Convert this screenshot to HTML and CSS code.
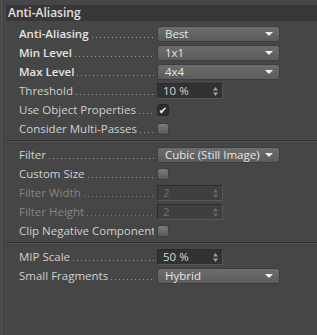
FILE: index.html
```html
<!DOCTYPE html>
<html lang="en">
<head>
  <meta charset="UTF-8" />
  <title>Anti-Aliasing</title>
  <link rel="stylesheet" href="styles.css">
</head>
<body>
  <div class="panel">
    <div class="group-title">Anti-Aliasing</div>

    <div class="rows">
      <div class="row">
        <div class="label strong"><span>Anti-Aliasing</span><span class="dots"></span></div>
        <div class="dropdown">Best<span class="arrow"></span></div>
      </div>
      <div class="row">
        <div class="label strong"><span>Min Level</span><span class="dots"></span></div>
        <div class="dropdown">1x1<span class="arrow"></span></div>
      </div>
      <div class="row">
        <div class="label strong"><span>Max Level</span><span class="dots"></span></div>
        <div class="dropdown">4x4<span class="arrow"></span></div>
      </div>
      <div class="row">
        <div class="label"><span>Threshold</span><span class="dots"></span></div>
        <div class="number">10 %<svg class="spin" width="5" height="9" viewBox="0 0 5 9"><path d="M0 3.5L2.5 0L5 3.5Z M0 5.5L5 5.5L2.5 9Z"/></svg></div>
      </div>
      <div class="row">
        <div class="label"><span>Use Object Properties</span><span class="dots"></span></div>
        <div class="check checked">&#10004;</div>
      </div>
      <div class="row">
        <div class="label"><span>Consider Multi-Passes</span><span class="dots"></span></div>
        <div class="check"></div>
      </div>
    </div>

    <div class="sep"></div>

    <div class="rows">
      <div class="row">
        <div class="label"><span>Filter</span><span class="dots"></span></div>
        <div class="dropdown">Cubic (Still Image)<span class="arrow"></span></div>
      </div>
      <div class="row">
        <div class="label"><span>Custom Size</span><span class="dots"></span></div>
        <div class="check"></div>
      </div>
      <div class="row disabled">
        <div class="label"><span>Filter Width</span><span class="dots"></span></div>
        <div class="number">2<svg class="spin" width="5" height="9" viewBox="0 0 5 9"><path d="M0 3.5L2.5 0L5 3.5Z M0 5.5L5 5.5L2.5 9Z"/></svg></div>
      </div>
      <div class="row disabled">
        <div class="label"><span>Filter Height</span><span class="dots"></span></div>
        <div class="number">2<svg class="spin" width="5" height="9" viewBox="0 0 5 9"><path d="M0 3.5L2.5 0L5 3.5Z M0 5.5L5 5.5L2.5 9Z"/></svg></div>
      </div>
      <div class="row">
        <div class="label"><span>Clip Negative Component</span><span class="dots"></span></div>
        <div class="check"></div>
      </div>
    </div>

    <div class="sep"></div>

    <div class="rows">
      <div class="row">
        <div class="label"><span>MIP Scale</span><span class="dots"></span></div>
        <div class="number">50 %<svg class="spin" width="5" height="9" viewBox="0 0 5 9"><path d="M0 3.5L2.5 0L5 3.5Z M0 5.5L5 5.5L2.5 9Z"/></svg></div>
      </div>
      <div class="row">
        <div class="label"><span>Small Fragments</span><span class="dots"></span></div>
        <div class="dropdown">Hybrid<span class="arrow"></span></div>
      </div>
    </div>
  </div>
</body>
</html>
```

FILE: styles.css
```css
* {
  margin: 0;
  padding: 0;
  box-sizing: border-box;
}

body {
  background-color: #464646;
  font-family: 'Open Sans', 'DejaVu Sans', sans-serif;
  font-size: 11.5px;
  color: #d0d0d0;
  height: 335px;
  border-left: 1px solid #555555;
  margin-left: 1px;
}

.panel {
  padding: 5px 0 0 4px;
}

.group-title {
  height: 16px;
  line-height: 16px;
  padding-left: 2px;
  background-color: #373737;
  color: #e2e2e2;
  font-weight: 600;
  font-size: 12px;
  margin-bottom: 3px;
}

.rows {
  padding-left: 13px;
}

.row {
  height: 19px;
  display: flex;
  align-items: center;
}

.label {
  width: 135px;
  margin-right: 3px;
  display: flex;
  align-items: baseline;
  white-space: nowrap;
  overflow: hidden;
}

.label.strong {
  font-weight: 600;
  color: #e4e4e4;
}

.dots {
  flex: 1;
  height: 9px;
  margin-left: 3px;
  background: linear-gradient(to right, #9a9a9a 1px, transparent 1px) repeat-x left bottom;
  background-size: 4px 1px;
}

.disabled .label {
  color: #858585;
}

.disabled .dots {
  background-image: linear-gradient(to right, #7a7a7a 1px, transparent 1px);
}

.dropdown {
  position: relative;
  width: 123px;
  height: 16px;
  line-height: 14px;
  padding-left: 7px;
  border: 1px solid #3d3d3d;
  border-radius: 3px;
  background: linear-gradient(#6d6d6d, #5b5b5b);
  color: #e6e6e6;
}

.arrow {
  position: absolute;
  right: 6px;
  top: 5px;
  width: 0;
  height: 0;
  border-left: 4px solid transparent;
  border-right: 4px solid transparent;
  border-top: 4px solid #f0f0f0;
}

.number {
  position: relative;
  width: 66px;
  height: 16px;
  line-height: 14px;
  padding-left: 5px;
  background-color: #323232;
  border: 1px solid #2b2b2b;
  border-bottom-color: #585858;
  border-right-color: #585858;
  color: #d6d6d6;
}

.disabled .number {
  background-color: #3f3f3f;
  color: #6f6f6f;
}

.spin {
  position: absolute;
  right: 4px;
  top: 3px;
  fill: #a0a0a0;
}

.disabled .spin {
  fill: #666666;
}

.check {
  width: 12px;
  height: 12px;
  border-radius: 3px;
  background: linear-gradient(#7a7a7a, #5a5a5a);
  border: 1px solid #3e3e3e;
  font-size: 10px;
  line-height: 10px;
  text-align: center;
  color: #ffffff;
}

.check.checked {
  background: #2c2c2c;
  border-color: #262626;
}

.sep {
  height: 2px;
  margin: 2px 0 3px;
  border-top: 1px solid #333333;
  border-bottom: 1px solid #525252;
}
```
